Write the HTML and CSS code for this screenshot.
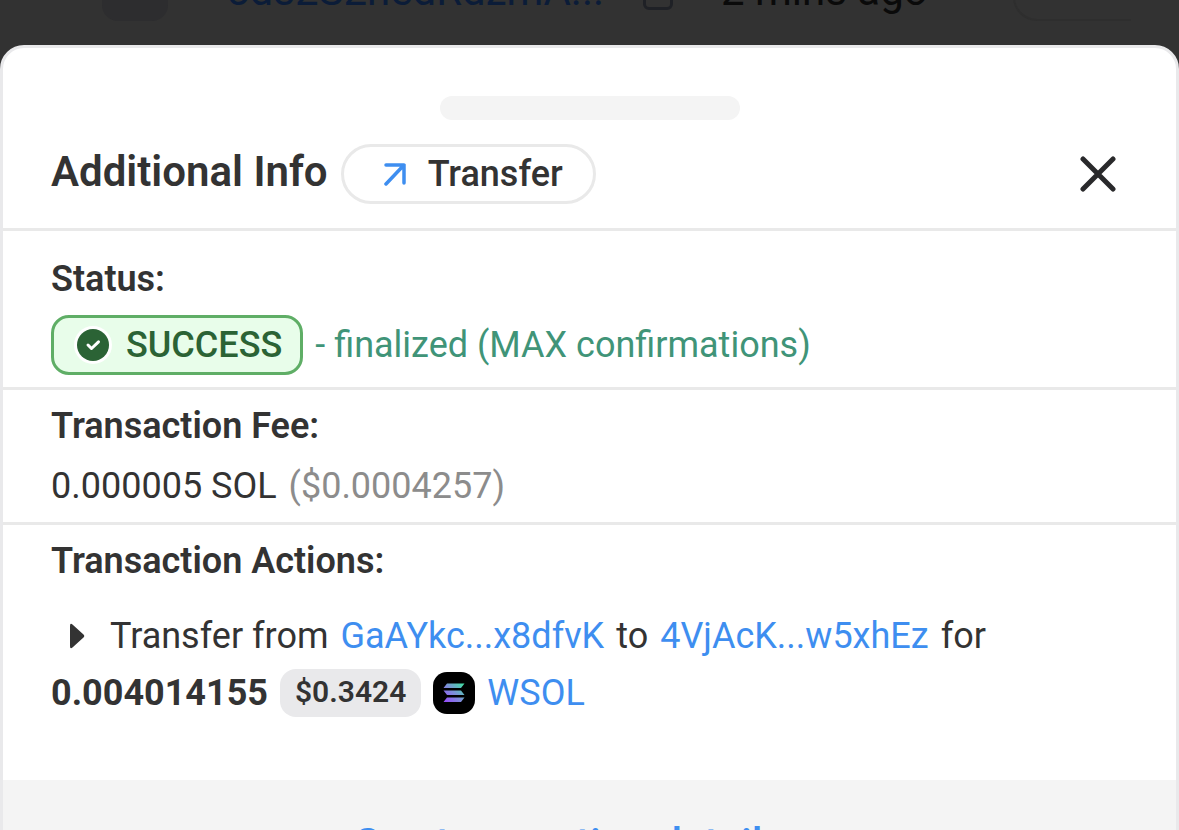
FILE: index.html
```html
<!DOCTYPE html>
<html lang="en">
<head>
    <meta charset="UTF-8">
    <meta name="viewport" content="width=device-width, initial-scale=1.0">
    <title>Additional Info</title>
    <link rel="stylesheet" href="styles.css">
</head>
<body>
    <!-- transaction list behind the sheet -->
    <div class="backdrop">
        <div class="backdrop-row">
            <span class="row-icon"></span>
            <a class="row-hash" href="#">5ds2S2hedRdzmA...</a>
            <span class="row-copy"></span>
            <span class="row-age">2 mins ago</span>
            <span class="row-action"></span>
        </div>
    </div>

    <div class="sheet" role="dialog" aria-labelledby="sheet-title">
        <div class="handle"></div>
        <header class="sheet-header">
            <h1 id="sheet-title">Additional Info</h1>
            <span class="type-badge">
                <svg width="24" height="24" viewBox="0 0 24 24" fill="none" stroke="#3e8ef0" stroke-width="3.500" stroke-linecap="round" stroke-linejoin="round">
                    <path d="M3 3H21V21M21 3L3 22"/>
                </svg>
                Transfer
            </span>
            <button class="close" aria-label="Close">
                <svg width="36" height="36" viewBox="0 0 36 36" fill="none" stroke="#29292b" stroke-width="5" stroke-linecap="round">
                    <path d="M3 3L33 33M33 3L3 33"/>
                </svg>
            </button>
        </header>

        <section class="status">
            <h2>Status:</h2>
            <div class="line">
                <span class="success">
                    <svg width="38" height="38" viewBox="0 0 38 38" fill="none">
                        <circle cx="19" cy="19" r="19" fill="#fff"/>
                        <circle cx="19" cy="19" r="16" fill="#2b6335"/>
                        <path d="M14 19L17.500 22.500L24.500 15.800" stroke="#fff" stroke-width="3" stroke-linecap="round" stroke-linejoin="round"/>
                    </svg>
                    SUCCESS
                </span>
                <span class="finalized">- finalized (MAX confirmations)</span>
            </div>
        </section>

        <section class="fee">
            <h2>Transaction Fee:</h2>
            <div class="line">0.000005 SOL <span class="muted">($0.0004257)</span></div>
        </section>

        <section class="actions">
            <h2>Transaction Actions:</h2>
            <div class="line">
                <svg class="caret" width="16" height="26" viewBox="0 0 16 26">
                    <path d="M1 3Q1 -1 4 2L14.500 11.500Q16 13 14.500 14.500L4 24Q1 27 1 23Z" fill="#333"/>
                </svg>
                <span>Transfer from</span>
                <a href="#">GaAYkc...x8dfvK</a>
                <span>to</span>
                <a href="#">4VjAcK...w5xhEz</a>
                <span>for</span>
            </div>
            <div class="line">
                <strong>0.004014155</strong>
                <span class="price">$0.3424</span>
                <svg class="token" width="42" height="42" viewBox="0 0 42 42">
                    <defs>
                        <linearGradient id="sol" x1="11" y1="31" x2="31" y2="11" gradientUnits="userSpaceOnUse">
                            <stop offset="0" stop-color="#9945ff"/>
                            <stop offset="0.500" stop-color="#7d8fd8"/>
                            <stop offset="1" stop-color="#3ee6a0"/>
                        </linearGradient>
                    </defs>
                    <rect width="42" height="42" rx="14" fill="#000"/>
                    <path d="M14 11.500H31.500L28 16H10.500ZM10.500 18.500H28L31.500 23H14ZM14 25.500H31.500L28 30H10.500Z" fill="url(#sol)"/>
                </svg>
                <a href="#">WSOL</a>
            </div>
        </section>

        <footer>
            <a href="#">
                See transaction details
                <svg width="28" height="28" viewBox="0 0 28 28" fill="none" stroke="currentColor" stroke-width="4" stroke-linecap="round" stroke-linejoin="round">
                    <path d="M10 6L18 14L10 22"/>
                </svg>
            </a>
        </footer>
    </div>
</body>
</html>
```
FILE: styles.css
```css
* {
    box-sizing: border-box;
}
body {
    margin: 0;
    height: 100vh;
    overflow: hidden;
    display: flex;
    flex-direction: column;
    background-color: #323232;
    color: #333;
    font-family: Roboto, "Liberation Sans", sans-serif;
    font-size: 36px;
    line-height: 48px;
}
h1, h2 {
    margin: 0;
    font-weight: 600;
}
h1 {
    padding-bottom: 4px;
    font-size: 42px;
}
h2 {
    font-size: 36px;
}
a {
    color: #3e8ef0;
    text-decoration: none;
}
svg {
    display: block;
    flex-shrink: 0;
}

/* dimmed page */
.backdrop {
    flex: none;
    height: 45px;
    padding: 0 48px;
    display: flex;
    align-items: flex-end;
    overflow: hidden;
    font-size: 42px;
}
.backdrop-row {
    flex: 1;
    height: 60px;
    margin: 0 0 24px;
    padding-left: 54px;
    display: flex;
    align-items: flex-end;
}
.row-icon {
    flex: none;
    width: 66px;
    height: 66px;
    border-radius: 16px;
    background-color: #2d2d2f;
}
.row-hash {
    flex: none;
    width: 475px;
    padding-left: 58px;
    margin-bottom: 6px;
    color: #0b1c38;
}
.row-copy {
    flex: none;
    width: 30px;
    height: 36px;
    margin-bottom: 11px;
    border: 3px solid #1f2126;
    border-radius: 6px;
}
.row-age {
    margin: 0 auto 6px 48px;
    color: #0a0a0a;
}
.row-action {
    width: 118px;
    height: 60px;
    border: 2px solid #2e2e2e;
    border-right: 0;
    border-radius: 24px 0 0 24px;
}

.sheet {
    flex: none;
    padding-top: 48px;
    border: 3px solid #e9e9eb;
    border-radius: 24px 24px 0 0;
    background-color: #fff;
}
.handle {
    width: 300px;
    height: 24px;
    margin: 0 auto;
    border-radius: 12px;
    background-color: #f4f4f4;
}
.sheet-header {
    display: flex;
    align-items: center;
    padding: 24px 48px;
    border-bottom: 3px solid #e9e9e9;
}
.type-badge {
    display: flex;
    align-items: center;
    gap: 21px;
    height: 60px;
    margin-left: 13px;
    padding: 0 30px 0 39px;
    border: 3px solid #e9e9e9;
    border-radius: 30px;
    font-weight: 500;
}
.close {
    margin-left: auto;
    padding: 12px;
    border: 0;
    background: none;
}

section {
    padding: 12px 48px;
    border-bottom: 3px solid #e9e9e9;
}
.line {
    display: flex;
    align-items: center;
    gap: 12px;
    min-height: 48px;
}
.status {
    padding-top: 24px;
}
.status .line {
    margin-top: 12px;
}
.success {
    display: flex;
    align-items: center;
    gap: 14px;
    height: 60px;
    padding: 0 18px 0 20px;
    border: 3px solid #5fae66;
    border-radius: 18px;
    background-color: #e8fdea;
    color: #2b6335;
    font-weight: 500;
}
.finalized {
    color: #409478;
}
.fee .line {
    margin-top: 12px;
}
.muted {
    color: #8c8c8c;
}
.actions {
    padding-bottom: 63px;
    border-bottom: 0;
}
.actions .line {
    margin-top: 9px;
}
.actions h2 + .line {
    margin-top: 27px;
}
.caret {
    margin: 0 13px 0 18px;
}
.price {
    height: 48px;
    padding: 0 15px;
    border-radius: 16px;
    background-color: #e9e9eb;
    font-size: 30px;
    font-weight: 600;
    line-height: 45px;
}
footer {
    padding: 40px 48px;
    background-color: #f4f4f4;
    font-size: 42px;
    font-weight: 500;
}
footer a {
    display: flex;
    align-items: center;
    justify-content: center;
    gap: 12px;
}
```
